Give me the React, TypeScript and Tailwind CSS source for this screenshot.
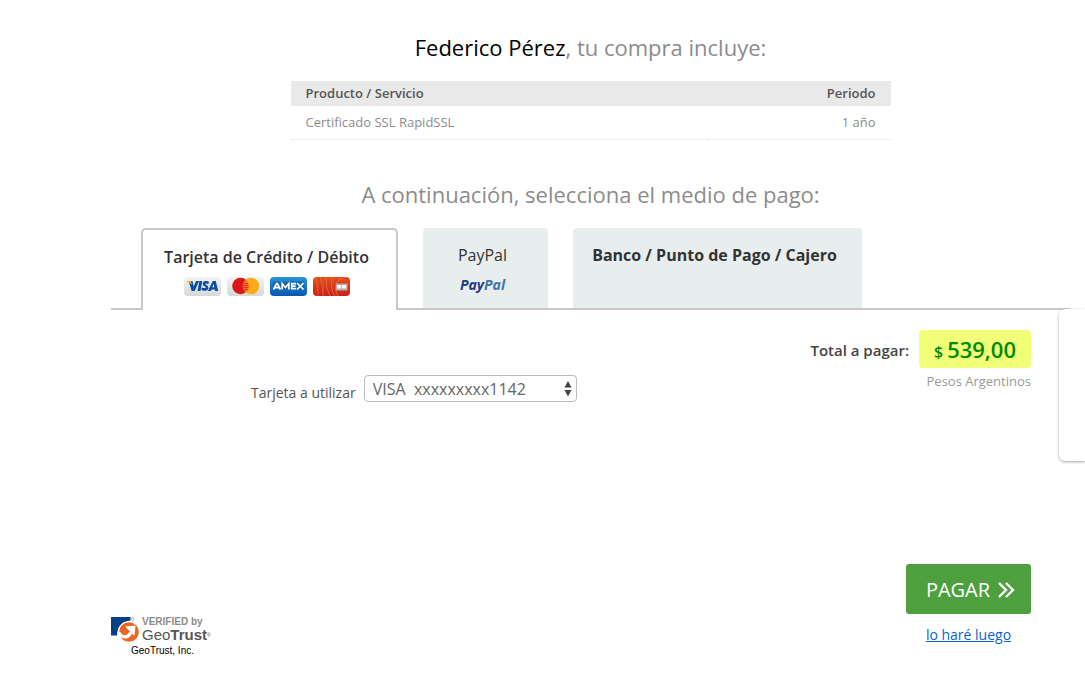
import { useState } from "react";

function VisaCard() {
  return (
    <svg width="37" height="19" viewBox="0 0 37 19" role="img" aria-label="Visa">
      <defs>
        <linearGradient id="cardGray" x1="0" y1="0" x2="0" y2="1">
          <stop offset="0" stopColor="#f3f3f3" />
          <stop offset="1" stopColor="#d6d7d9" />
        </linearGradient>
      </defs>
      <rect width="37" height="19" rx="4" fill="url(#cardGray)" />
      <path d="M5 4h3.500l1.200 5.500L12 4h3l-4.300 10H7.600L5.400 6.200z" fill="#0c4da2" />
      <path d="M2.800 4H7l1.200 4.200C7 6.500 5.200 5.300 2.800 4.500z" fill="#f7a823" />
      <path d="M15.300 4h2.900l-1.700 10h-2.900z" fill="#0c4da2" />
      <path
        d="M25 4.700c-1.500-.8-3.500-.9-4.900-.2-1.600.8-2 2.700-.7 3.900.8.700 2.400 1.100 2.400 1.900 0 .9-2 .9-4 .1l-.5 2.700c1.700.8 4.200.9 5.600.1 1.700-.9 2-3.100.7-4.300-.9-.8-2.300-1.100-2.300-1.800 0-.8 1.800-.7 3.200-.1z"
        fill="#0c4da2"
      />
      <path d="M28.800 4h3l2.400 10h-3l-.3-1.600h-3.400l-.7 1.600h-2.900zM29.600 6.800l-1.300 3.400h2z" fill="#0c4da2" fillRule="evenodd" />
    </svg>
  );
}

function MasterCard() {
  return (
    <svg width="37" height="19" viewBox="0 0 37 19" role="img" aria-label="Mastercard">
      <rect width="37" height="19" rx="4" fill="url(#cardGray)" />
      <circle cx="13.500" cy="9" r="8.300" fill="#d9161d" />
      <circle cx="24" cy="9" r="8.300" fill="#fba919" />
      <path d="M18.700 2.600a8.300 8.300 0 0 1 0 12.800a8.300 8.300 0 0 1 0-12.800z" fill="#f0701c" />
      <path d="M16.200 6.500h5M15.800 8.500h6M15.800 10.500h6M16.200 12.500h5" stroke="#d9301d" strokeWidth=".8" />
    </svg>
  );
}

function AmexCard() {
  return (
    <svg width="37" height="19" viewBox="0 0 37 19" role="img" aria-label="Amex">
      <defs>
        <linearGradient id="cardBlue" x1="0" y1="0" x2="0" y2="1">
          <stop offset="0" stopColor="#2b93d6" />
          <stop offset="1" stopColor="#0658ae" />
        </linearGradient>
      </defs>
      <rect width="37" height="19" rx="4" fill="url(#cardBlue)" />
      <rect x="3" y="4.500" width="31" height="9.500" fill="#1467b4" />
      <g fill="none" stroke="#fff" strokeWidth="1.700">
        <path d="M3.600 12.500l3-6h.8l3 6M5.200 10.700h4" />
        <path d="M12.200 12.500V6.500l3.300 4 3.300-4v6" />
        <path d="M26 6.700h-4.300v5H26M21.700 9.200h4" />
        <path d="M27 6l6.500 6.500M33.500 6L27 12.500" />
      </g>
    </svg>
  );
}

function RedCard() {
  return (
    <svg width="37" height="19" viewBox="0 0 37 19" role="img" aria-label="Tarjeta">
      <defs>
        <linearGradient id="cardRed" x1="0" y1="0" x2="0" y2="1">
          <stop offset="0" stopColor="#e5501c" />
          <stop offset="1" stopColor="#c9211a" />
        </linearGradient>
        <clipPath id="cardClip">
          <rect width="37" height="19" rx="4" />
        </clipPath>
      </defs>
      <rect width="37" height="19" rx="4" fill="url(#cardRed)" />
      <g fill="none" stroke="#ea7440" strokeWidth=".8" clipPath="url(#cardClip)">
        <path d="M2 0q4 9 3 19M7 0q4 9 3 19M13 0q-1 10 4 19M20 0q-4 10 2 19M35 0q-10 1-12 7t2 12" />
      </g>
      <rect x="23" y="6.500" width="11.500" height="7" fill="#b9aaa5" />
      <rect x="24.300" y="8" width="4" height="3.500" fill="#fff" />
      <rect x="29.200" y="8" width="4" height="3.500" fill="#fff" />
    </svg>
  );
}

function GeoTrustMark() {
  return (
    <svg width="29" height="26" viewBox="0 0 29 26" aria-hidden="true" className="shrink-0">
      <path d="M0 0h19.500v3.500C11.500 4.500 6.500 9.500 6 18.500H0z" fill="#053f84" />
      <circle cx="17.500" cy="15" r="10.700" fill="#fff" />
      <circle cx="18" cy="15" r="9.800" fill="#ee6421" />
      <path d="M6 15.500l3.500-.5c1.500 3.500 5 4.500 8 1l3.500-4 2 2.500-3.500 4.500c-4 4.500-10.500 3-13.500-3.500z" fill="#fff" />
      <path d="M14 9.500l10.500-1-1 10.500z" fill="#fff" />
      <circle cx="21.700" cy="2" r="1.400" fill="none" stroke="#999" strokeWidth=".7" />
    </svg>
  );
}

export default function App() {
  const [method, setMethod] = useState("card");

  return (
    <div className="relative min-h-screen overflow-x-hidden bg-white pt-[31px] pr-[15px] pl-[111px] font-['Open_Sans',sans-serif] text-[#333]">
      <main>
        <h1 className="text-center text-[22px] leading-8 text-[#8c8c8c]">
          <span className="text-black">Federico Pérez</span>, tu compra incluye:
        </h1>

        <table className="mx-auto mt-[18px] w-full max-w-[600px] border-collapse text-[13px]">
          <thead>
            <tr className="h-[25px] bg-[#e9e9e9] text-[#555]">
              <th className="px-[15px] text-left font-semibold">Producto / Servicio</th>
              <th className="px-[15px] text-right font-semibold">Periodo</th>
            </tr>
          </thead>
          <tbody>
            <tr className="h-[33px] border-b border-dotted border-[#e0e0e0] text-[#8c8c8c]">
              <td className="px-[15px]">Certificado SSL RapidSSL</td>
              <td className="px-[15px] text-right">1 año</td>
            </tr>
          </tbody>
        </table>

        <h2 className="mt-[38px] text-center text-[22px] leading-8 text-[#8c8c8c]">
          A continuación, selecciona el medio de pago:
        </h2>

        <div role="tablist" className="mt-[18px] flex h-[82px] gap-[25px] border-b-2 border-[#c8c8c8] pl-[30px]">
          <button
            type="button"
            role="tab"
            aria-selected={method === "card"}
            onClick={() => setMethod("card")}
            className="relative -mb-0.5 flex w-[257px] flex-col items-center rounded-t-[5px] border-2 border-b-0 border-[#c8c8c8] bg-white pt-[15px] pr-1.5 font-semibold"
          >
            <span className="text-base">Tarjeta de Crédito / Débito</span>
            <span className="mt-2 flex gap-1.5">
              <VisaCard />
              <MasterCard />
              <AmexCard />
              <RedCard />
            </span>
          </button>
          <button
            type="button"
            role="tab"
            aria-selected={method === "paypal"}
            onClick={() => setMethod("paypal")}
            className="flex w-[125px] flex-col items-center rounded-t-[4px] bg-[#e8eeee] pt-[15px] pr-1.5"
          >
            <span className="text-base font-medium">PayPal</span>
            <span className="mt-2 text-sm leading-[19px] font-bold text-[#253b80] italic">
              Pay<span className="text-[#3f74a8]">Pal</span>
            </span>
          </button>
          <button
            type="button"
            role="tab"
            aria-selected={method === "bank"}
            onClick={() => setMethod("bank")}
            className="flex w-[289px] flex-col items-center rounded-t-[4px] bg-[#e8eeee] pt-[15px] pr-1.5 font-bold"
          >
            <span className="text-base">Banco / Punto de Pago / Cajero</span>
          </button>
        </div>

        <section className="pt-5 pr-[39px]">
          <div className="flex justify-end gap-2.5">
            <p className="pt-2 text-[15px] leading-6 font-semibold text-[#444]">Total a pagar:</p>
            <div className="text-right">
              <p className="flex h-[38px] w-28 items-baseline justify-center gap-1 rounded-[4px] bg-[#f2ff78] font-semibold text-[#008a00]">
                <span className="text-base">$</span>
                <span className="text-[22px] leading-[38px]">539,00</span>
              </p>
              <p className="mt-1 text-[13px] leading-[18px] text-[#999]">Pesos Argentinos</p>
            </div>
          </div>

          <div className="-mt-[15px] flex items-center gap-2 pl-[140px]">
            <label htmlFor="card" className="pt-2 text-sm text-[#555]">
              Tarjeta a utilizar
            </label>
            <span className="relative">
              <select
                id="card"
                className="block h-[27px] w-[213px] appearance-none rounded-[4px] border border-[#bbb] bg-white pr-6 pl-2 text-base leading-6 text-[#666]"
              >
                <option>VISA&nbsp; xxxxxxxxx1142</option>
              </select>
              <svg
                width="8"
                height="16"
                viewBox="0 0 8 16"
                aria-hidden="true"
                className="pointer-events-none absolute top-1.5 right-[5px]"
              >
                <path d="M4 0l3.500 6.500h-7zM4 15.500L.5 9h7z" fill="#444" />
              </svg>
            </span>
          </div>
        </section>

        <footer className="mt-[161px] flex items-end justify-between pr-[39px]">
          <div>
            <div className="flex gap-0.5">
              <GeoTrustMark />
              <div className="font-['Liberation_Sans',sans-serif]">
                <p className="text-[10px] leading-[10px] font-bold text-[#8b8b8b]">VERIFIED by</p>
                <p className="text-[15px] leading-4 text-[#555]">
                  Geo<b>Trust</b>
                  <sup className="text-[5px]">®</sup>
                </p>
              </div>
            </div>
            <p className="mt-0.5 pl-5 font-['Liberation_Sans',sans-serif] text-[10px] leading-3 text-black">
              GeoTrust, Inc.
            </p>
          </div>
          <div className="flex flex-col items-center pb-3">
            <button
              type="button"
              className="flex h-[50px] w-[125px] items-center justify-center gap-2 rounded-[3px] bg-[#4ea03f] pt-0.5 pl-1 text-xl text-white"
            >
              PAGAR
              <svg width="17" height="16" viewBox="0 0 17 16" aria-hidden="true">
                <path d="M1 1l7 7-7 7M8 1l7 7-7 7" fill="none" stroke="#fff" strokeWidth="2.400" />
              </svg>
            </button>
            <a href="#later" className="mt-[11px] text-sm text-[#0a63d0] underline">
              lo haré luego
            </a>
          </div>
        </footer>
      </main>

      <aside className="absolute top-[309px] right-0 h-[152px] w-[26px] rounded-l-[6px] bg-white shadow-[0_1px_3px_rgba(0,0,0,0.35)]" />
    </div>
  );
}
